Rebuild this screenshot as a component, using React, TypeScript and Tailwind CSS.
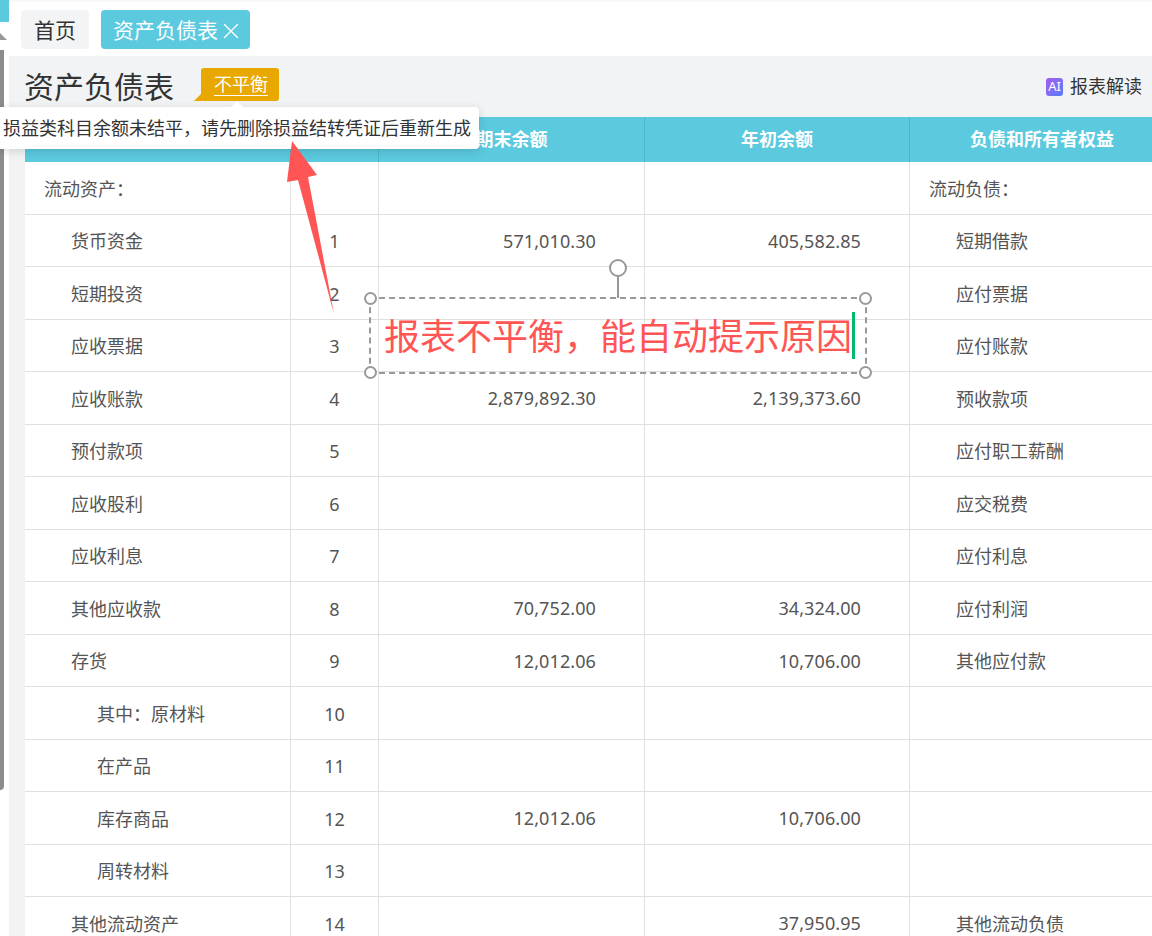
import React from "react";
import { X } from "lucide-react";

const cols = "grid grid-cols-[266px_88px_266px_265px_1fr]";

// indent: 0 = group title, 1 = item, 2 = sub item
const rows = [
  { name: "流动资产：", indent: 0, no: "", end: "", begin: "", right: "流动负债：", rightIndent: 0 },
  { name: "货币资金", indent: 1, no: "1", end: "571,010.30", begin: "405,582.85", right: "短期借款", rightIndent: 1 },
  { name: "短期投资", indent: 1, no: "2", end: "", begin: "", right: "应付票据", rightIndent: 1 },
  { name: "应收票据", indent: 1, no: "3", end: "", begin: "", right: "应付账款", rightIndent: 1 },
  { name: "应收账款", indent: 1, no: "4", end: "2,879,892.30", begin: "2,139,373.60", right: "预收款项", rightIndent: 1 },
  { name: "预付款项", indent: 1, no: "5", end: "", begin: "", right: "应付职工薪酬", rightIndent: 1 },
  { name: "应收股利", indent: 1, no: "6", end: "", begin: "", right: "应交税费", rightIndent: 1 },
  { name: "应收利息", indent: 1, no: "7", end: "", begin: "", right: "应付利息", rightIndent: 1 },
  { name: "其他应收款", indent: 1, no: "8", end: "70,752.00", begin: "34,324.00", right: "应付利润", rightIndent: 1 },
  { name: "存货", indent: 1, no: "9", end: "12,012.06", begin: "10,706.00", right: "其他应付款", rightIndent: 1 },
  { name: "其中：原材料", indent: 2, no: "10", end: "", begin: "", right: "", rightIndent: 1 },
  { name: "在产品", indent: 2, no: "11", end: "", begin: "", right: "", rightIndent: 1 },
  { name: "库存商品", indent: 2, no: "12", end: "12,012.06", begin: "10,706.00", right: "", rightIndent: 1 },
  { name: "周转材料", indent: 2, no: "13", end: "", begin: "", right: "", rightIndent: 1 },
  { name: "其他流动资产", indent: 1, no: "14", end: "", begin: "37,950.95", right: "其他流动负债", rightIndent: 1 },
];

const indentClass = ["pl-[19px]", "pl-[46px]", "pl-[72px]"];

function Handle({ className }: { className: string }) {
  return <div className={`absolute w-[13px] h-[13px] rounded-full bg-white border-2 border-[#999999] ${className}`} />;
}

export default function App() {
  return (
    <div className="relative flex w-[1152px] h-[936px] overflow-hidden bg-white font-['Noto_Sans','Noto_Sans_CJK_SC',sans-serif]">
      {/* left edge of the sidebar */}
      <div className="w-[9px] shrink-0 flex flex-col items-start">
        <div className="w-full h-[22px] bg-[#5bc9de]" />
        <div className="mt-[11px] w-0 h-0 border-b-[7px] border-b-[#999999] border-r-[7px] border-r-transparent" />
        <div className="mt-[10px] w-1 h-[740px] bg-[#8c8c8c] rounded-br-[4px]" />
      </div>

      <div className="flex-1 flex flex-col min-w-0">
        {/* tabs */}
        <div className="h-[56px] shrink-0 flex items-start gap-3 pt-[10px] pl-3 border-t-2 border-[#f7f8fa] box-border">
          <div className="-mt-[2px] h-[39px] w-[68px] flex items-center justify-center pt-[2px] rounded bg-[#f3f4f6] text-[21px] text-[#333333]">首页</div>
          <div className="-mt-[2px] h-[39px] w-[149px] flex items-center pl-3 pt-[2px] rounded bg-[#5bc9de] text-[21px] text-white">
            资产负债表
            <X className="w-[26px] h-[26px] shrink-0" strokeWidth={1.3} />
          </div>
        </div>

        <div className="flex-1 bg-[#f2f3f5] pl-4 min-h-0">
          {/* title bar */}
          <div className="h-[61px] flex items-center justify-between">
            <div className="flex items-center">
              <h1 className="-ml-px text-[30px] font-normal text-[#333333]">资产负债表</h1>
              <div className="relative ml-[27px] mt-[-5px] h-[33px] w-[78px] flex items-center justify-center pl-[2px] rounded-[3px] bg-[#e8a800] text-[18px] text-white underline underline-offset-4">
                不平衡
                <div className="absolute left-[-7px] bottom-0 w-0 h-0 border-b-[8px] border-b-[#e8a800] border-l-[8px] border-l-transparent" />
              </div>
            </div>
            <div className="flex items-center gap-[7px] pr-[10px] text-[18px] text-[#333333]">
              <div className="w-[17px] h-[18px] rounded-[3px] bg-gradient-to-br from-[#a35cf0] to-[#4f7dfb] flex items-center justify-center text-[13px] text-white">AI</div>
              报表解读
            </div>
          </div>

          {/* balance sheet */}
          <div className="bg-white text-[18px] text-[#555555]">
            <div className={`${cols} h-[45px] bg-[#5bc9de] text-white font-bold text-center items-stretch`}>
              <div className="border-r border-[#4fb6ca]" />
              <div className="border-r border-[#4fb6ca]" />
              <div className="flex items-center justify-center border-r border-[#4fb6ca]">期末余额</div>
              <div className="flex items-center justify-center border-r border-[#4fb6ca]">年初余额</div>
              <div className="flex items-center justify-center pl-[22px]">负债和所有者权益</div>
            </div>
            {rows.map((row) => (
              <div key={row.no + row.name} className={`${cols} h-[52.5px] border-b border-[#e0e0e0] box-border`}>
                <div className={`flex items-center pt-[3px] border-r border-[#e0e0e0] ${indentClass[row.indent]}`}>{row.name}</div>
                <div className="flex items-center justify-center pt-[3px] border-r border-[#e0e0e0] text-[#555555]">{row.no}</div>
                <div className="flex items-center justify-end pt-[2px] pr-[48px] border-r border-[#e0e0e0] tracking-[0.1px]">{row.end}</div>
                <div className="flex items-center justify-end pt-[2px] pr-[48px] border-r border-[#e0e0e0] tracking-[0.1px]">{row.begin}</div>
                <div className={`flex items-center pt-[3px] ${indentClass[row.rightIndent]}`}>{row.right}</div>
              </div>
            ))}
          </div>
        </div>
      </div>

      {/* tooltip over the table */}
      <div className="absolute left-[-6px] top-[107px] w-[485px] h-[42px] flex items-center justify-end pr-2 rounded bg-white shadow-[0_2px_10px_rgba(0,0,0,0.15)] text-[18px] text-[#333333] whitespace-nowrap">
        损益类科目余额未结平，请先删除损益结转凭证后重新生成
        <div className="absolute left-[237px] top-[-6px] w-0 h-0 border-x-[6px] border-x-transparent border-b-[6px] border-b-white" />
      </div>

      {/* annotation arrow */}
      <svg className="absolute left-[280px] top-[135px]" width="60" height="185" viewBox="0 0 60 185">
        <polygon points="12,6 37,40 28,42 54,179 18,45 7,47" fill="#ff5555" />
      </svg>

      {/* annotation text box */}
      <div className="absolute left-[369px] top-[297px] w-[498px] h-[77px] border-2 border-dashed border-[#999999] box-border">
        <div className="flex items-center h-full pl-[13px] text-[36px] leading-none text-[#ff5555] whitespace-nowrap">
          <span className="pt-[2px]">报表不平衡，能自动提示原因</span>
          <div className="w-[3px] h-[47px] bg-[#00b96b]" />
        </div>
        <Handle className="left-[-7px] top-[-7px]" />
        <Handle className="right-[-7px] top-[-7px]" />
        <Handle className="left-[-7px] bottom-[-7px]" />
        <Handle className="right-[-7px] bottom-[-7px]" />
        <div className="absolute left-[246px] top-[-23px] w-[2px] h-[22px] bg-[#999999]" />
        <div className="absolute left-[238px] top-[-40px] w-[18px] h-[18px] rounded-full bg-white border-2 border-[#999999]" />
      </div>
    </div>
  );
}
